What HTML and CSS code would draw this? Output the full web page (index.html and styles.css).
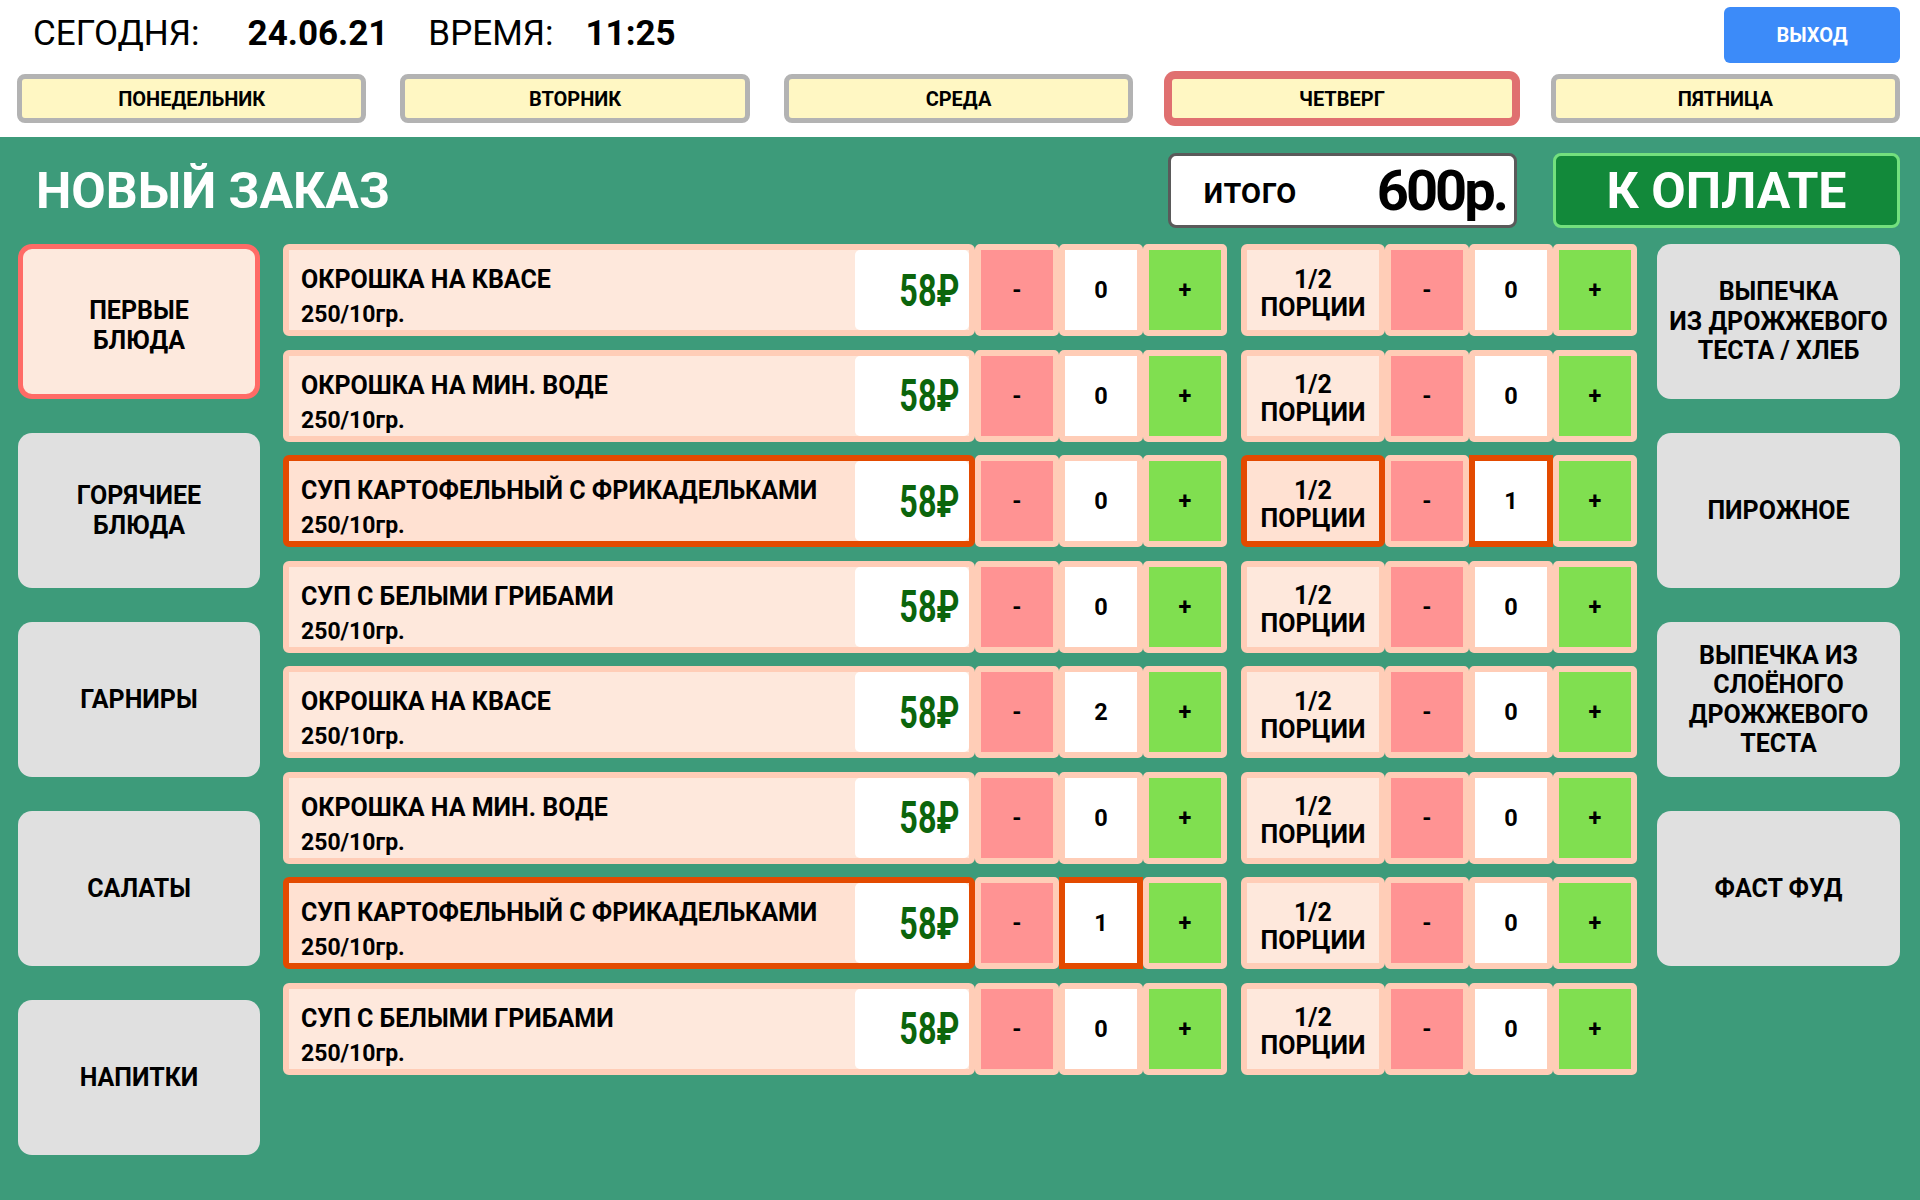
FILE: index.html
```html
<!DOCTYPE html>
<html lang="ru">
<head>
<meta charset="utf-8">
<title>Новый заказ</title>
<link rel="stylesheet" href="styles.css">
</head>
<body>
<header class="top">
  <div class="top-row">
    <div class="date">
      <span class="lbl l1">СЕГОДНЯ:</span><b class="v1">24.06.21</b><span class="lbl l2">ВРЕМЯ:</span><b class="v2">11:25</b>
    </div>
    <button class="exit">ВЫХОД</button>
  </div>
  <div class="days">
    <div class="day">ПОНЕДЕЛЬНИК</div>
    <div class="day">ВТОРНИК</div>
    <div class="day">СРЕДА</div>
    <div class="day active">ЧЕТВЕРГ</div>
    <div class="day">ПЯТНИЦА</div>
  </div>
</header>
<main class="main">
  <div class="head">
    <h1>НОВЫЙ ЗАКАЗ</h1>
    <div class="total"><span class="t-lbl">итого</span><span class="t-sum">600р.</span></div>
    <div class="pay">К ОПЛАТЕ</div>
  </div>
  <div class="body">
    <nav class="cats">
      <div class="cat active">ПЕРВЫЕ<br>БЛЮДА</div>
      <div class="cat">ГОРЯЧИЕЕ<br>БЛЮДА</div>
      <div class="cat">ГАРНИРЫ</div>
      <div class="cat">САЛАТЫ</div>
      <div class="cat">НАПИТКИ</div>
    </nav>
    <div class="rows">
      <div class="row">
        <div class="name"><div class="name-text"><div class="n1">ОКРОШКА НА КВАСЕ</div><div class="n2">250/10гр.</div></div><div class="price"><span>58₽</span></div></div>
        <div class="step"><div class="cell minus">-</div><div class="cell val">0</div><div class="cell plus">+</div></div>
        <div class="portion">1/2<br>ПОРЦИИ</div>
        <div class="step"><div class="cell minus">-</div><div class="cell val">0</div><div class="cell plus">+</div></div>
      </div>
      <div class="row">
        <div class="name"><div class="name-text"><div class="n1">ОКРОШКА НА МИН. ВОДЕ</div><div class="n2">250/10гр.</div></div><div class="price"><span>58₽</span></div></div>
        <div class="step"><div class="cell minus">-</div><div class="cell val">0</div><div class="cell plus">+</div></div>
        <div class="portion">1/2<br>ПОРЦИИ</div>
        <div class="step"><div class="cell minus">-</div><div class="cell val">0</div><div class="cell plus">+</div></div>
      </div>
      <div class="row">
        <div class="name sel"><div class="name-text"><div class="n1">СУП КАРТОФЕЛЬНЫЙ С ФРИКАДЕЛЬКАМИ</div><div class="n2">250/10гр.</div></div><div class="price"><span>58₽</span></div></div>
        <div class="step"><div class="cell minus">-</div><div class="cell val">0</div><div class="cell plus">+</div></div>
        <div class="portion sel">1/2<br>ПОРЦИИ</div>
        <div class="step"><div class="cell minus">-</div><div class="cell val sel">1</div><div class="cell plus">+</div></div>
      </div>
      <div class="row">
        <div class="name"><div class="name-text"><div class="n1">СУП С БЕЛЫМИ ГРИБАМИ</div><div class="n2">250/10гр.</div></div><div class="price"><span>58₽</span></div></div>
        <div class="step"><div class="cell minus">-</div><div class="cell val">0</div><div class="cell plus">+</div></div>
        <div class="portion">1/2<br>ПОРЦИИ</div>
        <div class="step"><div class="cell minus">-</div><div class="cell val">0</div><div class="cell plus">+</div></div>
      </div>
      <div class="row">
        <div class="name"><div class="name-text"><div class="n1">ОКРОШКА НА КВАСЕ</div><div class="n2">250/10гр.</div></div><div class="price"><span>58₽</span></div></div>
        <div class="step"><div class="cell minus">-</div><div class="cell val">2</div><div class="cell plus">+</div></div>
        <div class="portion">1/2<br>ПОРЦИИ</div>
        <div class="step"><div class="cell minus">-</div><div class="cell val">0</div><div class="cell plus">+</div></div>
      </div>
      <div class="row">
        <div class="name"><div class="name-text"><div class="n1">ОКРОШКА НА МИН. ВОДЕ</div><div class="n2">250/10гр.</div></div><div class="price"><span>58₽</span></div></div>
        <div class="step"><div class="cell minus">-</div><div class="cell val">0</div><div class="cell plus">+</div></div>
        <div class="portion">1/2<br>ПОРЦИИ</div>
        <div class="step"><div class="cell minus">-</div><div class="cell val">0</div><div class="cell plus">+</div></div>
      </div>
      <div class="row">
        <div class="name sel"><div class="name-text"><div class="n1">СУП КАРТОФЕЛЬНЫЙ С ФРИКАДЕЛЬКАМИ</div><div class="n2">250/10гр.</div></div><div class="price"><span>58₽</span></div></div>
        <div class="step"><div class="cell minus">-</div><div class="cell val sel">1</div><div class="cell plus">+</div></div>
        <div class="portion">1/2<br>ПОРЦИИ</div>
        <div class="step"><div class="cell minus">-</div><div class="cell val">0</div><div class="cell plus">+</div></div>
      </div>
      <div class="row">
        <div class="name"><div class="name-text"><div class="n1">СУП С БЕЛЫМИ ГРИБАМИ</div><div class="n2">250/10гр.</div></div><div class="price"><span>58₽</span></div></div>
        <div class="step"><div class="cell minus">-</div><div class="cell val">0</div><div class="cell plus">+</div></div>
        <div class="portion">1/2<br>ПОРЦИИ</div>
        <div class="step"><div class="cell minus">-</div><div class="cell val">0</div><div class="cell plus">+</div></div>
      </div>
    </div>
    <nav class="cats">
      <div class="cat">ВЫПЕЧКА<br>ИЗ ДРОЖЖЕВОГО<br>ТЕСТА / ХЛЕБ</div>
      <div class="cat">ПИРОЖНОЕ</div>
      <div class="cat">ВЫПЕЧКА ИЗ<br>СЛОЁНОГО<br>ДРОЖЖЕВОГО<br>ТЕСТА</div>
      <div class="cat">ФАСТ ФУД</div>
    </nav>
  </div>
</main>
</body>
</html>
```
FILE: styles.css
```css
* { box-sizing: border-box; margin: 0; padding: 0; }
html, body {
  width: 1920px;
  height: 1200px;
  overflow: hidden;
  background: #3d9b7a;
  font-family: Roboto, "Noto Sans", sans-serif;
  color: #000;
}

/* top white bar */
.top {
  background: #fff;
  height: 137px;
  padding: 7px 20px 0 17px;
}
.top-row {
  display: flex;
  justify-content: space-between;
  align-items: flex-start;
  height: 67px;
}
.date {
  display: flex;
  margin: 6px 0 0 16px;
  font-size: 35px;
  line-height: 41px;
}
.date b { font-weight: 700; }
.l1 { margin-right: 48px; }
.v1 { margin-right: 40px; }
.l2 { margin-right: 32px; }
.exit {
  width: 176px;
  height: 56px;
  border: 0;
  border-radius: 6px;
  background: #3c8bf9;
  color: #fff;
  font: 700 20px Roboto, sans-serif;
}
.days {
  display: grid;
  grid-template-columns: repeat(5, 1fr);
  gap: 34px;
}
.day {
  height: 49px;
  background: #fff7c3;
  border: 5px solid #b3b3b3;
  border-radius: 8px;
  display: flex;
  align-items: center;
  justify-content: center;
  font: 700 20px Roboto, sans-serif;
}
.day.active {
  border-color: #e07070;
  box-shadow: 0 0 0 3px #e07070;
}

/* green work area */
.main {
  padding: 16px 20px 0 18px;
}
.head {
  display: flex;
  align-items: center;
  height: 75px;
}
.head h1 {
  flex: 1;
  margin-left: 18px;
  color: #fff;
  font: 700 50px Roboto, sans-serif;
}
.total {
  width: 349px;
  height: 75px;
  margin-right: 36px;
  background: #fff;
  border: 3px solid #5a5a5a;
  border-radius: 8px;
  display: flex;
  align-items: center;
  justify-content: space-between;
  padding: 0 8px 0 32px;
}
.t-lbl { font: 500 36px Roboto, sans-serif; }
.t-sum { font: 700 56px Roboto, sans-serif; letter-spacing: -3px; }
.pay {
  width: 347px;
  height: 75px;
  background: #12893a;
  border: 3px solid #73e07e;
  border-radius: 8px;
  color: #fff;
  font: 700 50px Roboto, sans-serif;
  display: flex;
  align-items: center;
  justify-content: center;
}

.body {
  display: flex;
  margin-top: 16px;
}
.cats {
  display: grid;
  grid-template-rows: repeat(5, 155px);
  row-gap: 34px;
  width: 242px;
  flex: none;
}
.cats:last-child { width: 243px; }
.cat {
  background: #e0e0e0;
  border-radius: 14px;
  display: flex;
  align-items: center;
  justify-content: center;
  text-align: center;
  font: 700 25px/29.5px Roboto, sans-serif;
}
.cat.active {
  background: #fde9dd;
  border: 5px solid #ff6b66;
  padding-top: 8px;
}

.rows {
  width: 1355px;
  margin: 0 19px 0 23px;
  display: grid;
  grid-auto-rows: 92px;
  row-gap: 13.5px;
  align-content: start;
}
.row { display: flex; }
.name {
  width: 692px;
  display: flex;
  background: #fee8dc;
  border: 6px solid #ffcdb7;
  border-radius: 6px;
}
.name.sel {
  background: #ffe1d2;
  border-color: #e34a00;
}
.name-text {
  flex: 1;
  padding: 15px 0 0 12px;
  font-weight: 700;
}
.n1 { font-size: 25px; line-height: 29px; }
.n2 { font-size: 23px; line-height: 29px; margin-top: 6px; }
.price {
  width: 114px;
  background: #fff;
  border-radius: 5px;
  display: flex;
  align-items: center;
  justify-content: flex-end;
  padding-right: 10px;
}
.price span {
  display: inline-block;
  font: 700 45px Roboto, "DejaVu Sans", sans-serif;
  color: #0c650c;
  transform: scaleX(0.72);
  transform-origin: right center;
}
.step { display: flex; }
.cell {
  width: 84px;
  border: 6px solid #ffcdb7;
  border-radius: 5px;
  display: flex;
  align-items: center;
  justify-content: center;
  font: 700 23.5px Roboto, sans-serif;
}
.minus { background: #ff9393; }
.val { background: #fff; }
.plus { background: #80df50; }
.cell.sel { border-color: #e34a00; border-radius: 0; }
.portion {
  width: 144px;
  margin-left: 14px;
  background: #fee8dc;
  border: 6px solid #ffcdb7;
  border-radius: 6px;
  display: flex;
  align-items: center;
  justify-content: center;
  text-align: center;
  padding-top: 7px;
  font: 700 25px/28px Roboto, sans-serif;
}
.portion.sel {
  background: #ffe1d2;
  border-color: #e34a00;
}
```
